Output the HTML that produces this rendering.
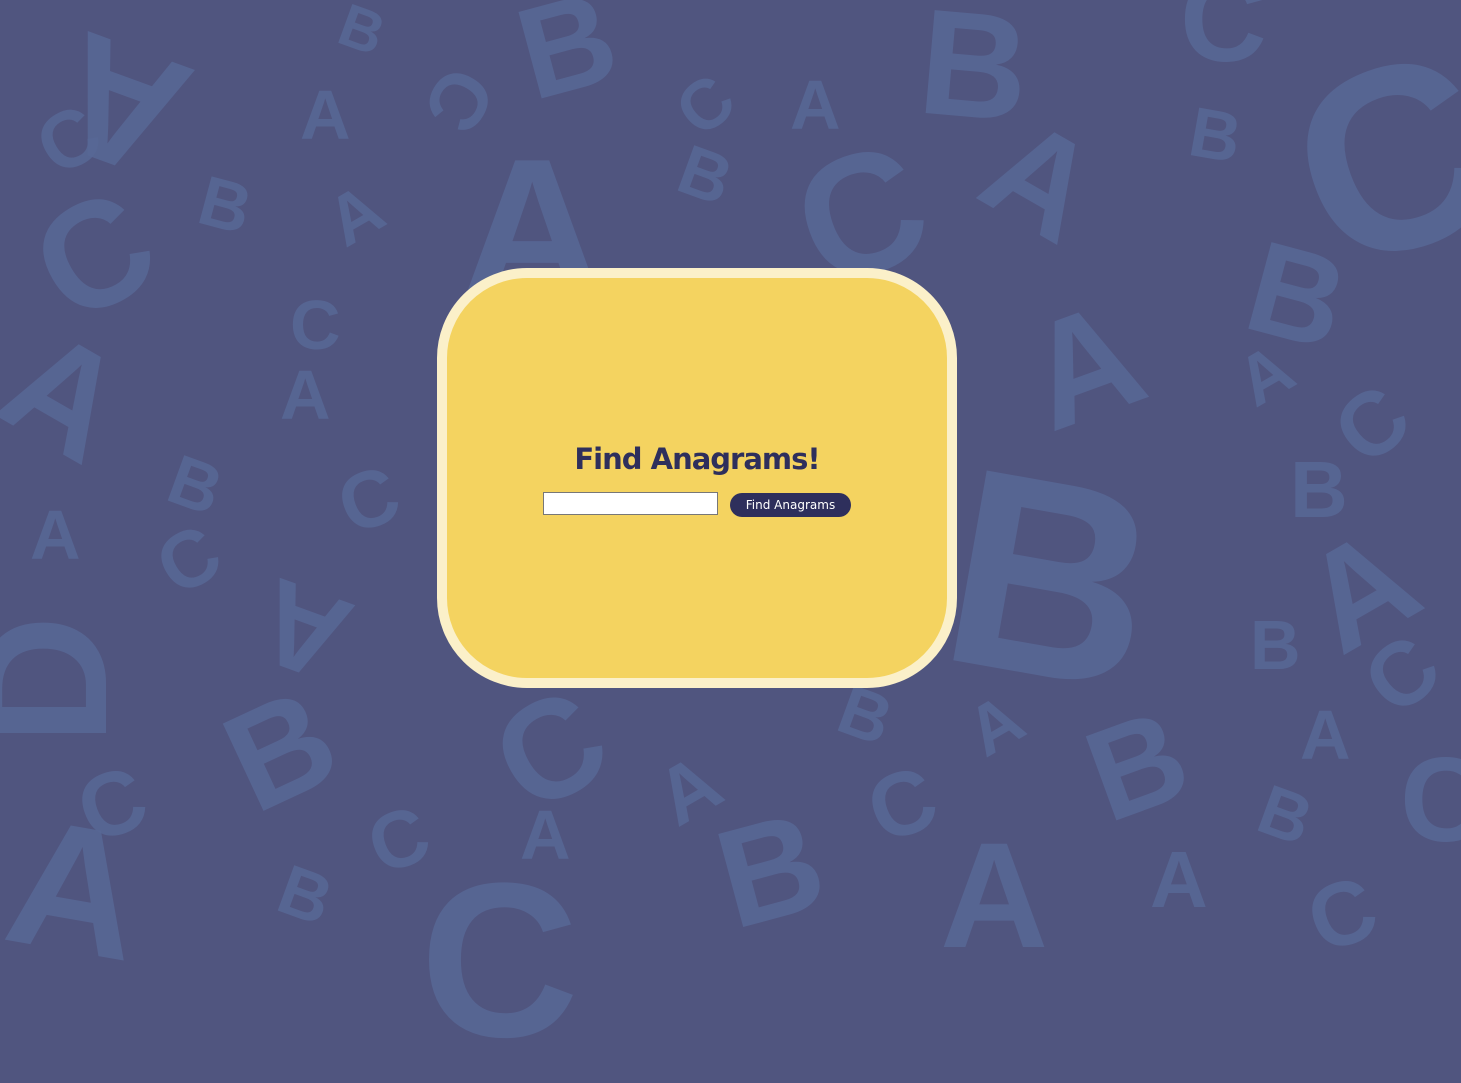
<!DOCTYPE html>
<html><head><style>
html,body{margin:0;padding:0;width:1461px;height:959px;overflow:hidden;background:#50557f;font-family:"Liberation Sans",sans-serif}
.l{position:absolute;color:#586896;font-weight:bold;font-family:"Liberation Sans",sans-serif;line-height:1;opacity:.85}
.card{position:absolute;left:437px;top:268px;width:500px;height:400px;border:10px solid #fbf0c9;border-radius:90px;background:#f4d360;text-align:center}
h1{margin:0;position:absolute;top:164px;left:0;right:0;font-size:29px;color:#2e2f5c;font-family:"DejaVu Sans","Liberation Sans",sans-serif;font-weight:bold;letter-spacing:-1px}
input{position:absolute;left:96px;top:214px;width:175px;height:23px;border:1px solid #777;padding:0;margin:0;background:#fff;box-sizing:border-box}
button{position:absolute;left:283px;top:215px;width:121px;height:24px;border:0;border-radius:12px;background:#2e2f5c;color:#fff;font-size:12px;font-family:"DejaVu Sans",sans-serif;padding:0}
</style></head><body>
<div class="l" style="left:60px;top:20px;font-size:170px;transform:rotate(200deg)">A</div>
<div class="l" style="left:340px;top:0px;font-size:60px;transform:rotate(20deg)">B</div>
<div class="l" style="left:520px;top:-20px;font-size:130px;transform:rotate(-15deg)">B</div>
<div class="l" style="left:920px;top:-10px;font-size:150px;transform:rotate(5deg)">B</div>
<div class="l" style="left:1180px;top:-40px;font-size:120px">C</div>
<div class="l" style="left:1300px;top:30px;font-size:260px;transform:rotate(-20deg)">C</div>
<div class="l" style="left:40px;top:100px;font-size:80px;transform:rotate(-30deg)">C</div>
<div class="l" style="left:300px;top:80px;font-size:70px">A</div>
<div class="l" style="left:430px;top:60px;font-size:80px;transform:rotate(120deg)">C</div>
<div class="l" style="left:680px;top:70px;font-size:70px;transform:rotate(-40deg)">C</div>
<div class="l" style="left:790px;top:70px;font-size:70px">A</div>
<div class="l" style="left:680px;top:140px;font-size:70px;transform:rotate(20deg)">B</div>
<div class="l" style="left:1190px;top:100px;font-size:70px;transform:rotate(10deg)">B</div>
<div class="l" style="left:460px;top:130px;font-size:200px">A</div>
<div class="l" style="left:800px;top:130px;font-size:170px;transform:rotate(-20deg)">C</div>
<div class="l" style="left:990px;top:110px;font-size:140px;transform:rotate(30deg)">A</div>
<div class="l" style="left:40px;top:180px;font-size:150px;transform:rotate(-30deg)">C</div>
<div class="l" style="left:200px;top:170px;font-size:70px;transform:rotate(15deg)">B</div>
<div class="l" style="left:330px;top:180px;font-size:70px;transform:rotate(-30deg)">A</div>
<div class="l" style="left:290px;top:290px;font-size:70px">C</div>
<div class="l" style="left:1250px;top:230px;font-size:130px;transform:rotate(15deg)">B</div>
<div class="l" style="left:1030px;top:290px;font-size:150px;transform:rotate(-20deg)">A</div>
<div class="l" style="left:10px;top:320px;font-size:150px;transform:rotate(30deg)">A</div>
<div class="l" style="left:280px;top:360px;font-size:70px">A</div>
<div class="l" style="left:1240px;top:340px;font-size:70px;transform:rotate(-30deg)">A</div>
<div class="l" style="left:1340px;top:380px;font-size:90px;transform:rotate(-40deg)">C</div>
<div class="l" style="left:950px;top:440px;font-size:280px;transform:rotate(10deg)">B</div>
<div class="l" style="left:170px;top:450px;font-size:70px;transform:rotate(20deg)">B</div>
<div class="l" style="left:340px;top:460px;font-size:80px;transform:rotate(-20deg)">C</div>
<div class="l" style="left:30px;top:500px;font-size:70px">A</div>
<div class="l" style="left:160px;top:520px;font-size:80px;transform:rotate(-30deg)">C</div>
<div class="l" style="left:1290px;top:450px;font-size:80px">B</div>
<div class="l" style="left:1310px;top:520px;font-size:140px;transform:rotate(-30deg)">A</div>
<div class="l" style="left:-20px;top:590px;font-size:180px;transform:rotate(-90deg)">D</div>
<div class="l" style="left:260px;top:570px;font-size:120px;transform:rotate(200deg)">A</div>
<div class="l" style="left:1250px;top:610px;font-size:70px">B</div>
<div class="l" style="left:1370px;top:630px;font-size:90px;transform:rotate(-40deg)">C</div>
<div class="l" style="left:230px;top:680px;font-size:140px;transform:rotate(-25deg)">B</div>
<div class="l" style="left:500px;top:680px;font-size:140px;transform:rotate(-30deg)">C</div>
<div class="l" style="left:840px;top:680px;font-size:70px;transform:rotate(20deg)">B</div>
<div class="l" style="left:970px;top:690px;font-size:70px;transform:rotate(-30deg)">A</div>
<div class="l" style="left:1090px;top:700px;font-size:130px;transform:rotate(-20deg)">B</div>
<div class="l" style="left:1300px;top:700px;font-size:70px">A</div>
<div class="l" style="left:1400px;top:740px;font-size:120px">C</div>
<div class="l" style="left:80px;top:760px;font-size:90px;transform:rotate(-20deg)">C</div>
<div class="l" style="left:660px;top:750px;font-size:80px;transform:rotate(-30deg)">A</div>
<div class="l" style="left:870px;top:760px;font-size:90px;transform:rotate(-20deg)">C</div>
<div class="l" style="left:10px;top:800px;font-size:180px;transform:rotate(10deg)">A</div>
<div class="l" style="left:370px;top:800px;font-size:80px;transform:rotate(-20deg)">C</div>
<div class="l" style="left:520px;top:800px;font-size:70px">A</div>
<div class="l" style="left:720px;top:800px;font-size:140px;transform:rotate(-15deg)">B</div>
<div class="l" style="left:940px;top:820px;font-size:150px">A</div>
<div class="l" style="left:1150px;top:840px;font-size:80px">A</div>
<div class="l" style="left:1260px;top:780px;font-size:70px;transform:rotate(20deg)">B</div>
<div class="l" style="left:1310px;top:870px;font-size:90px;transform:rotate(-20deg)">C</div>
<div class="l" style="left:280px;top:860px;font-size:70px;transform:rotate(20deg)">B</div>
<div class="l" style="left:420px;top:850px;font-size:220px">C</div>
<div class="card">
<h1>Find Anagrams!</h1>
<input type="text">
<button>Find Anagrams</button>
</div>
</body></html>
